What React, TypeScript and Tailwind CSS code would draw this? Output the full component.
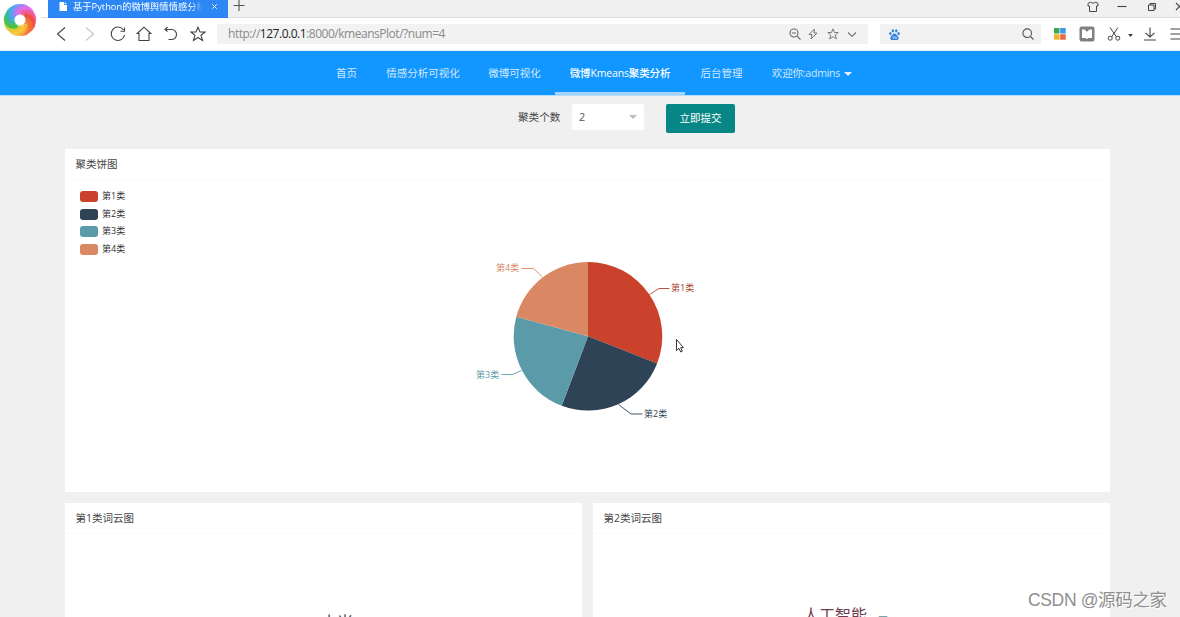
import React from "react";

const SANS = "font-['Open_Sans','Noto_Sans_CJK_SC',sans-serif]";

type IconProps = { box: string; className: string; children: React.ReactNode; width?: number };

function Icon({ box, className, children, width = 1.1 }: IconProps) {
  return (
    <svg viewBox={box} className={`block shrink-0 ${className}`} fill="none" stroke="currentColor" strokeWidth={width}>
      {children}
    </svg>
  );
}

const STAR = "M8 1.2 10 6h5l-4 3.3 1.5 5.2L8 11.5l-4.5 3L5 9.300 1 6h5z";

function BrowserLogo() {
  const petals = ["#a4d22f", "#3dbb45", "#2eb9a8", "#4aa5f5", "#a77cf0", "#e56be8", "#f0568c", "#ee4a35", "#f5702c", "#f8c02c"];
  const angles = [130, 165, 200, 232, 265, 295, 330, 5, 45, 90];
  return (
    <svg viewBox="-20 -20 40 40" className="block h-10 w-10 shrink-0">
      {petals.map((color, i) => (
        <path
          key={color}
          d="M4 -7C10 -8 17 -3 15.500 5C14 10 10 12 7 13C11 8 10 2 4 -1Z"
          fill={color}
          opacity="0.85"
          transform={`rotate(${angles[i]})`}
        />
      ))}
      <circle r="5.500" fill="#fff" />
    </svg>
  );
}

function TabRow() {
  return (
    <div className="flex h-[18px] border-b border-[#dedede] bg-[#f0f0f0]">
      <div className="w-12 bg-white" />
      <div className="flex h-[18px] w-[180px] items-start overflow-hidden bg-[#2c86f3] text-white">
        <svg viewBox="0 0 8 9" className="ml-[11px] mt-[2px] block h-[9px] w-2 shrink-0">
          <path d="M0.500 0H5V3H8V9H0.500ZM5.700 0 8 2.300H5.700Z" fill="#fff" />
        </svg>
        <div className="ml-[6px] w-[130px] overflow-hidden whitespace-nowrap text-[9.300px] leading-[14px] [mask-image:linear-gradient(to_right,black_90%,transparent)]">
          基于Python的微博舆情情感分析
        </div>
        <Icon box="0 0 8 8" className="ml-[8px] mt-[3px] h-[7px] w-[7px]">
          <path d="M1.500 1.500 6.500 6.500M6.500 1.500 1.500 6.500" />
        </Icon>
      </div>
      <Icon box="0 0 12 12" className="ml-[5px] h-3 w-3 text-[#555]">
        <path d="M6 0V11M0.500 5.500H11.500" />
      </Icon>
      <div className="flex-1" />
      <div className="flex w-[93px] items-start overflow-hidden text-[#444]">
        <Icon box="0 0 12 12" className="mt-[1px] h-3 w-3" width={1}>
          <path d="M3.500 1 1 2.500V5H2.500V10.500H9.500V5H11V2.500L8.500 1 7.500 2H4.500Z" />
        </Icon>
        <Icon box="0 0 10 12" className="ml-[18px] mt-[1px] h-3 w-[10px]">
          <path d="M0.500 5.500H9.500" />
        </Icon>
        <Icon box="0 0 10 12" className="ml-5 mt-[1px] h-3 w-[10px]" width={1}>
          <path d="M1.500 4H7V9.500H1.500ZM3 4V2.500H8.500V8H7" />
        </Icon>
        <Icon box="0 0 10 12" className="ml-[18px] mt-[1px] h-3 w-[10px]">
          <path d="M1 2 8 9M8 2 1 9" />
        </Icon>
      </div>
    </div>
  );
}

function Toolbar() {
  return (
    <div className="flex h-8 items-center overflow-hidden bg-white text-[#444]">
      <div className="flex w-[217px] shrink-0 items-center pl-[55px]">
        <Icon box="0 0 12 16" className="h-4 w-3">
          <path d="M10 1.500 2.500 8 10 14.500" />
        </Icon>
        <Icon box="0 0 12 16" className="ml-[17px] h-4 w-3 text-[#c4c4c4]">
          <path d="M2 1.500 9.500 8 2 14.500" />
        </Icon>
        <Icon box="0 0 16 16" className="ml-[14px] h-4 w-4">
          <path d="M13.500 4A6.700 6.700 0 1 0 14.500 9M14.500 1.500V5.200H10.500" />
        </Icon>
        <Icon box="0 0 16 16" className="ml-[10px] h-4 w-4">
          <path d="M8 1.200 1.200 7.500H3V14.500H13V7.500H14.800Z" />
        </Icon>
        <Icon box="0 0 16 16" className="ml-[11px] h-4 w-4">
          <path d="M2 3.500H8.500A5 5 0 0 1 8.500 13.500H5.500M4.500 1 2 3.500 4.500 5.500" />
        </Icon>
        <Icon box="0 0 16 16" className="ml-[11px] h-4 w-4">
          <path d={STAR} />
        </Icon>
      </div>
      <div className="flex h-5 w-[651px] shrink-0 items-center bg-[#f2f2f2] pl-[11px] text-[#8a8a8a]">
        <div className="w-[561px] whitespace-nowrap text-[12px] leading-5 tracking-[-0.480px]">
          http://<span className="text-[#222]">127.0.0.1</span>:8000/kmeansPlot/?num=4
        </div>
        <Icon box="0 0 12 12" className="h-[12px] w-3 text-[#666]">
          <path d="M8.200 8.200 11.500 11.500M3 5H7" />
          <circle cx="5" cy="5" r="4" />
        </Icon>
        <Icon box="0 0 12 12" className="ml-[6px] h-3 w-3 text-[#777]" width={1}>
          <path d="M7.500 1 2 6.500H5L4 11 10 5H7Z" />
        </Icon>
        <Icon box="0 0 16 16" className="ml-[8px] h-[12px] w-3 text-[#777]" width={1.3}>
          <path d={STAR} />
        </Icon>
        <Icon box="0 0 10 10" className="ml-[8px] h-[10px] w-[10px] text-[#777]">
          <path d="M1 3.500 5 7.500 9 3.500" />
        </Icon>
      </div>
      <div className="ml-3 flex h-5 w-[161px] shrink-0 items-center bg-[#f2f2f2] pl-[9px]">
        <svg viewBox="0 0 12 12" className="block h-[11px] w-[11px]" fill="#3182dc">
          <ellipse cx="1.500" cy="5" rx="1.300" ry="1.700" />
          <ellipse cx="4.200" cy="2" rx="1.300" ry="1.800" />
          <ellipse cx="7.900" cy="2" rx="1.300" ry="1.800" />
          <ellipse cx="10.500" cy="5" rx="1.300" ry="1.700" />
          <path d="M6 4.800C8 5 8 6.500 9.800 7.800C11.300 9.500 10.500 12 8.500 12H3.500C1.500 12 0.700 9.500 2.200 7.800C4 6.500 4 5 6 4.800Z" />
          <path d="M4.500 8V10.300H5.500V8M7 8V10.300H8.500V8" fill="none" stroke="#d7e8fa" strokeWidth="0.700" />
        </svg>
        <Icon box="0 0 12 12" className="ml-[122px] h-3 w-3 text-[#555]">
          <path d="M8.500 8.500 11.500 11.500" />
          <circle cx="5.200" cy="5.200" r="4.300" />
        </Icon>
      </div>
      <svg viewBox="0 0 12 12" className="ml-[13px] block h-3 w-3 shrink-0">
        <rect width="5.500" height="5.500" fill="#3ba55c" />
        <rect x="6.200" width="5.500" height="5.500" fill="#3b9bea" />
        <rect y="6.200" width="5.500" height="5.500" fill="#f3b229" />
        <rect x="6.200" y="6.200" width="5.500" height="5.500" fill="#ee6745" />
      </svg>
      <svg viewBox="0 0 16 16" className="ml-[13px] block h-4 w-4 shrink-0">
        <rect x="0.500" y="0.500" width="15" height="15" rx="2" fill="#808080" />
        <path d="M3 3.500H5.500L8 5.800 10.500 3.500H13V12H9.500L8 13 6.500 12H3Z" fill="#fff" />
      </svg>
      <Icon box="0 0 14 14" className="ml-[12px] h-[14px] w-[14px]" width={1}>
        <path d="M3 0.500 9.500 10M11 0.500 4.500 10" />
        <circle cx="3.200" cy="11.200" r="2" />
        <circle cx="10.800" cy="11.200" r="2" />
      </Icon>
      <svg viewBox="0 0 6 4" className="ml-[7px] mt-[2px] block h-[3px] w-[5px] shrink-0">
        <path d="M0 0H6L3 4Z" fill="#333" />
      </svg>
      <Icon box="0 0 14 14" className="ml-[10px] h-[14px] w-[14px]">
        <path d="M7 0.500V10M2.500 5.800 7 10 11.500 5.800M1 13H13" />
      </Icon>
      <Icon box="0 0 14 14" className="ml-[13px] h-[14px] w-[14px]">
        <path d="M0.500 2H13.500M0.500 7H13.500M0.500 12H13.500" />
      </Icon>
    </div>
  );
}

function BrowserChrome() {
  return (
    <header className="relative h-[51px] shrink-0 border-b-2 border-[#dff0f7]">
      <TabRow />
      <Toolbar />
      <div className="absolute left-0 top-0 h-[45px] w-[41px] bg-white">
        <BrowserLogo />
      </div>
    </header>
  );
}

function NavBar() {
  const item = "flex items-center justify-center whitespace-nowrap text-[#d2e9ff]";
  return (
    <nav className="flex h-[45px] shrink-0 border-b border-[#b5dcfb] bg-[#1296ff] pl-[321px] pt-px text-[10.500px]">
      <div className={`${item} w-[51px]`}>首页</div>
      <div className={`${item} w-[102px]`}>情感分析可视化</div>
      <div className={`${item} w-[81px]`}>微博可视化</div>
      <div className="flex w-[130px] items-center justify-center whitespace-nowrap border-b-[3px] border-[#a5d2fb] pt-[3px] font-medium tracking-[-0.150px] text-white">
        微博Kmeans聚类分析
      </div>
      <div className={`${item} w-[73px]`}>后台管理</div>
      <div className={`${item} w-[108px]`}>
        <span className="tracking-[-0.200px]">欢迎你:admins</span>
        <svg viewBox="0 0 8 4" className="ml-[4px] block h-1 w-2">
          <path d="M0 0H8L4 4Z" fill="#e4f2ff" />
        </svg>
      </div>
    </nav>
  );
}

function ClusterForm() {
  return (
    <div className="flex h-[53px] shrink-0 items-start pl-[518px] pt-[8px]">
      <label className="w-[54px] whitespace-nowrap text-[10.600px] leading-[26px] text-[#444]">聚类个数</label>
      <div className="flex h-[26px] w-[72px] items-center justify-between rounded-[1px] bg-white pl-[7px] pr-[7px] text-[10.800px] text-[#555]">
        2
        <svg viewBox="0 0 8 4" className="block h-1 w-2">
          <path d="M0 0H8L4 4Z" fill="#bdbdbd" />
        </svg>
      </div>
      <button className="ml-[22px] h-[29px] w-[69px] rounded-[2px] bg-[#078686] text-[10.500px] text-white">立即提交</button>
    </div>
  );
}

const COLORS = ["#ca422c", "#2e4355", "#5b9ba9", "#d98863"];
const STOPS = [0, 111.5, 200.7, 285.2, 360];
const RADIUS = 74.3;

function point(deg: number) {
  const a = (deg * Math.PI) / 180;
  return `${588 + RADIUS * Math.sin(a)} ${336.3 - RADIUS * Math.cos(a)}`;
}

function PieChart() {
  const labels = [
    { text: "第1类", x: 671, y: 291, line: "M649.500 294.500 659 288.500H669.500", color: "#a8452f" },
    { text: "第2类", x: 644, y: 416.5, line: "M618.500 404.500 631 414H642.500", color: "#2e4355" },
    { text: "第3类", x: 476, y: 377.5, line: "M521.500 370.500 512.500 374.500H501.500", color: "#5b9ba9" },
    { text: "第4类", x: 496, y: 270.5, line: "M542 276.500 533.500 268.500H521.500", color: "#d98863" },
  ];
  return (
    <svg viewBox="460 250 260 180" className="ml-[395px] block h-[180px] w-[260px] shrink-0">
      {COLORS.map((color, i) => (
        <path
          key={color}
          d={`M588 336.300L${point(STOPS[i])}A${RADIUS} ${RADIUS} 0 0 1 ${point(STOPS[i + 1])}Z`}
          fill={color}
        />
      ))}
      {labels.map((l) => (
        <g key={l.text}>
          <path d={l.line} fill="none" stroke={l.color} strokeWidth="0.900" />
          <text x={l.x} y={l.y} fill={l.color} className="text-[9px]">
            {l.text}
          </text>
        </g>
      ))}
      <path d="M676.500 339.500V350.500L679 348.300 680.700 352 682.300 351.200 680.700 347.700H683.500Z" fill="#fff" stroke="#222" strokeWidth="0.900" />
    </svg>
  );
}

function CardTitle({ children }: { children: React.ReactNode }) {
  return (
    <h2 className="h-[31px] shrink-0 border-b border-[#fafafa] pl-[10.500px] text-[10.500px] leading-[30px] text-[#444]">{children}</h2>
  );
}

function PieCard() {
  const swatches = ["bg-[#ca422c]", "bg-[#2e4355]", "bg-[#5b9ba9]", "bg-[#d98863]"];
  return (
    <section className="flex h-[343px] shrink-0 flex-col bg-white">
      <CardTitle>聚类饼图</CardTitle>
      <ul className="ml-[15px] mt-[7px] h-[70px] w-[60px] shrink-0">
        {swatches.map((swatch, i) => (
          <li key={swatch} className="flex h-[17.700px] items-center">
            <span className={`mt-[1px] h-[11px] w-[18px] rounded-[3px] ${swatch}`} />
            <span className="ml-[4px] text-[9px] leading-[16px] text-[#333]">第{i + 1}类</span>
          </li>
        ))}
      </ul>
      <div className="-mt-[7px]">
        <PieChart />
      </div>
    </section>
  );
}

export default function App() {
  return (
    <div className={`relative flex h-[617px] w-[1180px] flex-col overflow-hidden bg-[#f0f0f0] ${SANS}`}>
      <BrowserChrome />
      <NavBar />
      <ClusterForm />
      <main className="flex w-[1110px] flex-1 flex-col gap-[11px] overflow-hidden pl-[65px]">
        <PieCard />
        <div className="grid h-[240px] shrink-0 grid-cols-2 gap-[11px]">
          <section className="bg-white">
            <CardTitle>第1类词云图</CardTitle>
            <div className="pl-[256px] pt-[76px] text-[16px] leading-6 text-[#445]">小米</div>
          </section>
          <section className="bg-white">
            <CardTitle>第2类词云图</CardTitle>
            <div className="flex pl-[210px] pt-[69px] text-[16px] leading-6 text-[#6f3d51]">
              人工智能
              <span className="ml-[10px] pt-[11px] text-[12px] leading-4 text-[#5d9298]">元</span>
            </div>
          </section>
        </div>
      </main>
      <div className="absolute left-[1028px] top-[588px] whitespace-nowrap text-[17.500px] leading-6 tracking-[-0.350px] text-[#8f8f8f] font-['Liberation_Sans','Noto_Sans_CJK_SC',sans-serif] [text-shadow:1px_1px_0_#fff]">
        CSDN @源码之家
      </div>
    </div>
  );
}
